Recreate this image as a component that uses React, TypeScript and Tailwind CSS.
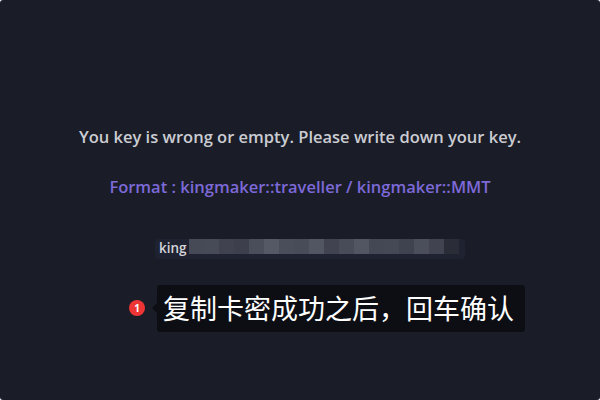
const mosaic = [
  "#464a56", "#474b57", "#40434f", "#3d404c", "#4a4e5a", "#555965", "#4a4e5a",
  "#484c58", "#525662", "#414450", "#484c58", "#525662", "#444855",
  "#454956", "#3f4350", "#4b4f5b", "#414450", "#2a2d38",
];

export default function App() {
  return (
    <div
      className="w-[600px] h-[400px] bg-[#1a1d28] rounded-[3px] flex flex-col items-center overflow-hidden"
      style={{ fontFamily: "'Open Sans', Lato, sans-serif" }}
    >
      <p className="mt-[125px] text-[16.5px] font-semibold text-[#cbccd2]">
        You key is wrong or empty. Please write down your key.
      </p>
      <p className="mt-[25px] text-[16.5px] font-semibold text-[#7d69d8]">
        Format : kingmaker::traveller / kingmaker::MMT
      </p>

      {/* key input, blurred */}
      <div className="mt-[39px] self-start ml-[155px] w-[310px] h-[20px] rounded-[4px] bg-[#1f2230] flex items-center">
        <span className="pl-[4px] text-[13.5px] font-semibold text-[#d4d5da] leading-none">king</span>
        <div className="flex h-[15px] self-start ml-[2px]">
          {mosaic.map((c, i) => (
            <div key={i} className="w-[15px] h-full" style={{ backgroundColor: c }} />
          ))}
        </div>
      </div>

      {/* step hint */}
      <div className="mt-[26px] self-start ml-[129px] flex items-center">
        <div className="w-[16px] h-[16px] rounded-full bg-[#ee3535] text-white text-[10px] font-bold flex items-center justify-center">
          1
        </div>
        <div className="ml-[7px] w-0 h-0 border-y-[5px] border-y-transparent border-r-[5px] border-r-[#0d0e14]" />
        <div
          className="h-[47px] w-[368px] rounded-[3px] bg-[#0d0e14] text-white text-[27px] flex items-center pl-[6px]"
          style={{ fontFamily: "'Noto Sans CJK SC', sans-serif" }}
        >
          复制卡密成功之后，回车确认
        </div>
      </div>
    </div>
  );
}
